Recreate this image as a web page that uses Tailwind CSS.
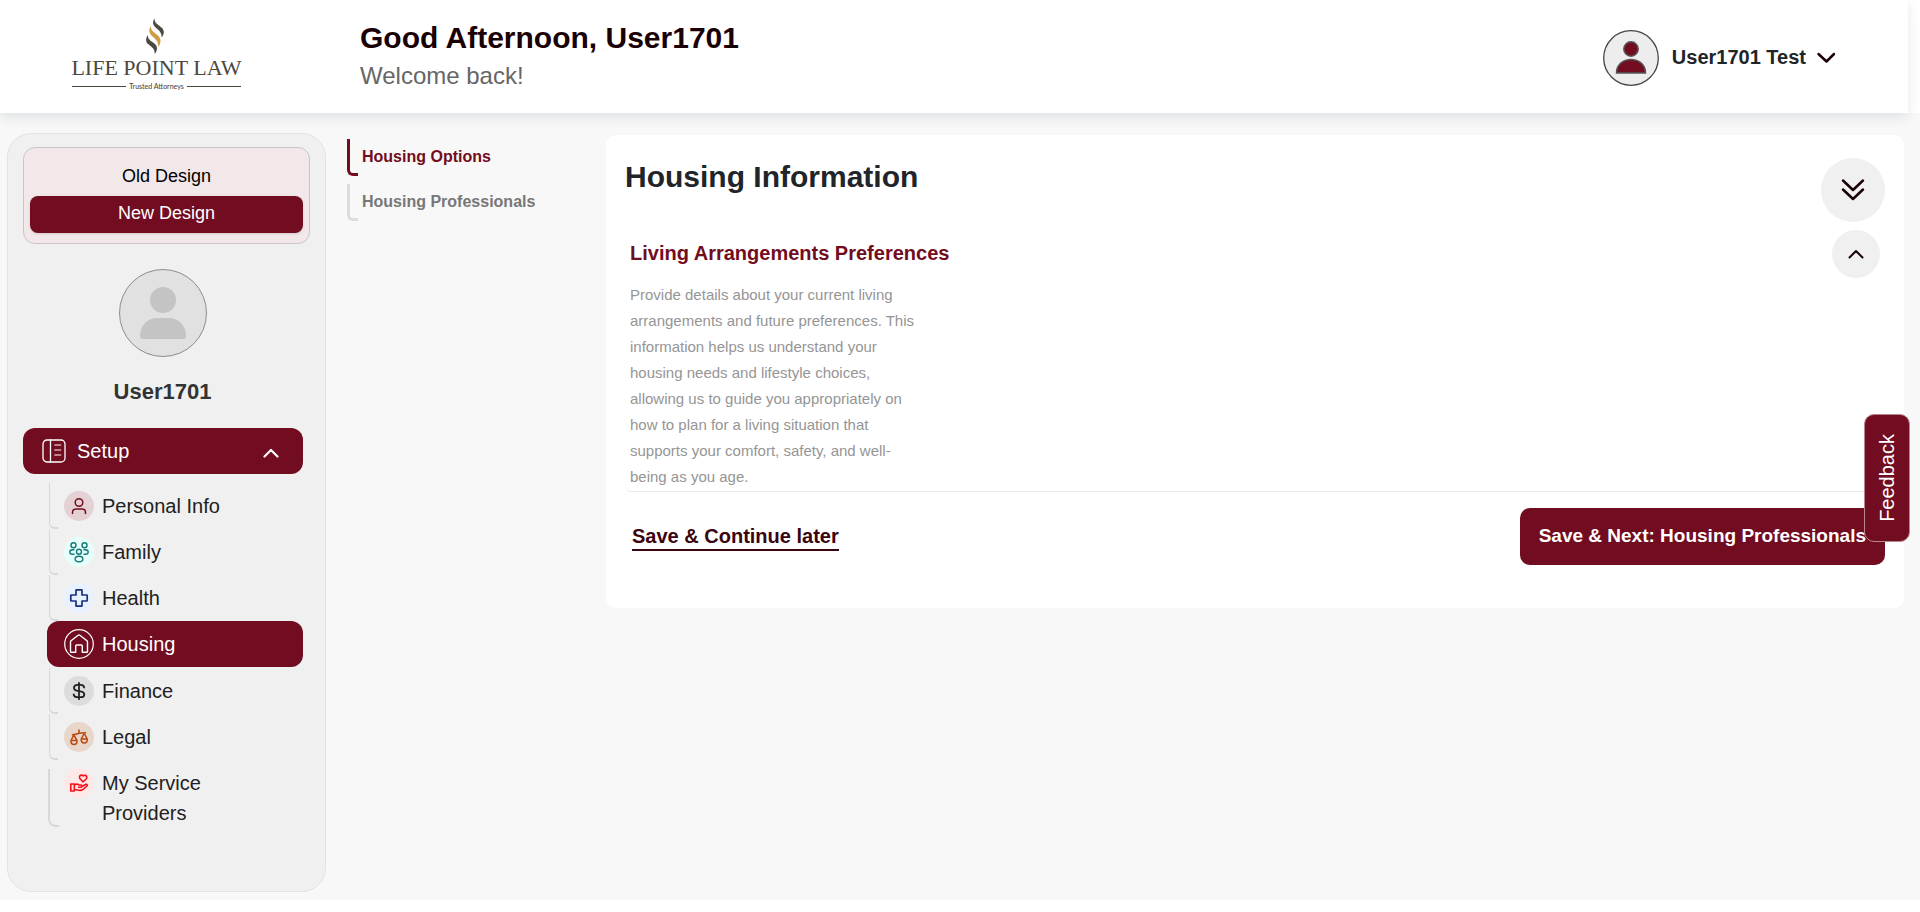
<!DOCTYPE html>
<html lang="en">
<head>
<meta charset="utf-8">
<meta name="viewport" content="width=device-width, initial-scale=1">
<title>Housing Information</title>
<script src="https://cdn.jsdelivr.net/npm/@tailwindcss/browser@4"></script>
</head>
<body class="bg-white font-['Liberation_Sans',Arial,sans-serif] text-[#212529]">

<header class="relative z-10 mr-3 flex h-[113px] items-center bg-white shadow-[0_4px_12px_rgba(40,60,70,0.12)]">
  <a href="#" aria-label="Life Point Law" class="ml-[72px] mr-[119px] flex w-[169px] shrink-0 flex-col items-center pb-1 text-[#4b483f]">
    <svg class="mr-1 h-9 w-[18px]" viewBox="0 0 18 36" aria-hidden="true">
      <path fill="#4b483f" d="M8.500 0C6.500 3.500 6.500 6.500 9 9C12.500 12 16 14 15.500 19.500C18.500 16 18.500 12 15.500 9.500C12 6.500 8 5 8.500 0Z"/>
      <path fill="#cf9d45" d="M4.800 8C2.500 11.500 3 15 5.500 17.500C9 21 12.500 22.500 12.300 29C15 25.500 15.500 21 12.500 18C9 14.500 4.500 13 4.800 8Z"/>
      <path fill="#4b483f" d="M2 17C-.5 20.500 -.5 23.500 2 26C5.500 29 9 30.500 8.800 36C11.500 32.500 11.800 28.500 9 26C5.500 23 1.500 22 2 17Z"/>
    </svg>
    <span class="whitespace-nowrap font-['Liberation_Serif',serif] text-[22px] leading-7">LIFE POINT LAW</span>
    <span class="flex w-full items-center gap-[3px] font-[Lato,sans-serif] text-[7px] font-medium leading-[9px]">
      <span class="h-px flex-1 bg-[#4b483f]"></span>Trusted Attorneys<span class="h-px flex-1 bg-[#4b483f]"></span>
    </span>
  </a>
  <div>
    <h1 class="text-[30px] font-bold leading-[38px] text-[#190005]">Good Afternoon, User1701</h1>
    <p class="text-[24px] leading-[38px] text-[#666]">Welcome back!</p>
  </div>
  <button type="button" class="ml-auto mr-[73px] flex items-center gap-[13px] pt-[3px] text-[20px] font-bold">
    <svg class="size-14" viewBox="0 0 56 56" aria-hidden="true">
      <circle cx="28" cy="28" r="27.300" fill="#ededed" stroke="#4a4446" stroke-width="1.300"/>
      <g fill="#720c20" stroke="#555" stroke-width="1.500"><circle cx="28" cy="19" r="7.200"/><path d="M13.500 43C13.500 25 42.500 25 42.500 43Z"/></g>
    </svg>
    <span class="pb-[2px]">User1701 Test</span>
    <svg class="-ml-[2px] h-3 w-[18px]" viewBox="0 0 18 12" fill="none" stroke="#190005" stroke-width="2.500" stroke-linecap="round" stroke-linejoin="round" aria-hidden="true"><path d="M1.500 2L9.500 9.500L17 2"/></svg>
  </button>
</header>

<div class="flex items-start bg-[#f8f8f8] pb-2 pl-[7px] pr-4 pt-5">

  <aside class="min-h-[759px] w-[319px] shrink-0 rounded-[24px] border border-[#e3e3e3] bg-[#f0f0f0] px-[15px] pt-[13px]">
    <div class="flex flex-col rounded-[12px] border border-[#c9c5c6] bg-[#f2e7e9] px-[6px] pb-[10px] pt-[11px] text-[18px]">
      <button type="button" class="h-[37px] rounded-md pb-[2px] text-black">Old Design</button>
      <button type="button" class="h-[37px] rounded-lg bg-[#720c20] pb-[2px] text-white shadow-sm">New Design</button>
    </div>

    <div class="mr-2 mt-[25px] flex flex-col items-center">
      <svg class="size-[88px]" viewBox="0 0 88 88" aria-hidden="true">
        <circle cx="44" cy="44" r="43.500" fill="#e1e1e1" stroke="#8c8c8c"/>
        <g fill="#c4c4c4"><circle cx="44" cy="31" r="13"/><path d="M21 67C21 56 29 49 38 49H50C59 49 67 56 67 67Q67 70 64 70H24Q21 70 21 67Z"/></g>
      </svg>
      <p class="mt-[18px] text-[22px] font-bold leading-[34px] text-[#333]">User1701</p>
    </div>

    <nav class="mr-[7px] mt-[19px] text-[20px] text-[#212121]" aria-label="Setup">
      <button type="button" class="flex h-[46px] w-full items-center rounded-[12px] bg-[#720c20] pl-[19px] pr-6 text-white">
        <svg class="mr-[11px] size-6" viewBox="0 0 24 24" fill="none" stroke="#fff" stroke-width="1.300" stroke-linecap="round" aria-hidden="true"><rect x="1" y="1" width="22" height="22" rx="4"/><path d="M8.500 1V23"/><path stroke="#d7a9b1" stroke-width="1.700" d="M13 6H18.500M13 11H18.500M13 16H18.500"/></svg>
        Setup
        <svg class="ml-auto mt-1 h-[10px] w-4" viewBox="0 0 16 10" fill="none" stroke="#fff" stroke-width="2.200" stroke-linecap="round" stroke-linejoin="round" aria-hidden="true"><path d="M1.500 8.500L8 2L14.500 8.500"/></svg>
      </button>
      <ul class="ml-6 pt-[9px]">
        <li class="relative">
          <span class="absolute left-[2px] top-0 h-[46px] w-[9px] rounded-bl-[6px] border-b-2 border-l border-[#d8d8d8]"></span>
          <a href="#" class="flex h-[46px] items-center gap-2 pl-[17px]">
            <svg class="size-[30px]" viewBox="0 0 30 30" fill="none" stroke="#720c20" stroke-width="1.500" stroke-linecap="round" aria-hidden="true"><circle cx="15" cy="15" r="15" fill="#e3d1d4" stroke="none"/><circle cx="15" cy="11.500" r="3.800"/><path d="M8.500 22.500V21.500Q8.500 18 12 18H18Q21.500 18 21.500 21.500V22.500"/></svg>
            Personal Info</a>
        </li>
        <li class="relative">
          <span class="absolute left-[2px] top-0 h-[46px] w-[9px] rounded-bl-[6px] border-b-2 border-l border-[#d8d8d8]"></span>
          <a href="#" class="flex h-[46px] items-center gap-2 pl-[17px]">
            <svg class="size-[30px]" viewBox="0 0 30 30" fill="none" stroke="#157a7a" stroke-width="1.400" stroke-linecap="round" aria-hidden="true"><circle cx="15" cy="15" r="15" fill="#e6fffb" stroke="none"/><circle cx="9.500" cy="8.300" r="2.500"/><circle cx="20.500" cy="8.300" r="2.500"/><circle cx="15" cy="14.800" r="2.500"/><ellipse cx="15" cy="22" rx="3.900" ry="2.700"/><path d="M10 12.800H8.500Q5.800 13 5.800 15Q5.800 17.200 8.500 17.300H10M20 12.800H21.500Q24.200 13 24.200 15Q24.200 17.200 21.500 17.300H20"/></svg>
            Family</a>
        </li>
        <li class="relative">
          <span class="absolute left-[2px] top-0 h-[46px] w-[9px] rounded-bl-[6px] border-b-2 border-l border-[#d8d8d8]"></span>
          <a href="#" class="flex h-[46px] items-center gap-2 pl-[17px]">
            <svg class="size-[30px]" viewBox="0 0 30 30" fill="none" stroke="#172f7c" stroke-width="1.700" stroke-linejoin="round" aria-hidden="true"><circle cx="15" cy="15" r="15" fill="#e8f1ff" stroke="none"/><path d="M12.500 6.800H17.500Q18 6.800 18 7.300V12H22.700Q23.200 12 23.200 12.500V17.500Q23.200 18 22.700 18H18V22.700Q18 23.200 17.500 23.200H12.500Q12 23.200 12 22.700V18H7.300Q6.800 18 6.800 17.500V12.500Q6.800 12 7.300 12H12V7.300Q12 6.800 12.500 6.800Z"/></svg>
            Health</a>
        </li>
        <li>
          <a href="#" aria-current="page" class="flex h-[46px] items-center gap-2 rounded-[12px] bg-[#720c20] pl-[17px] text-white">
            <svg class="size-[30px]" viewBox="0 0 30 30" fill="none" stroke="#fff" stroke-width="1.400" stroke-linejoin="round" aria-hidden="true"><circle cx="15" cy="15" r="14.300" stroke-width="1.200"/><path d="M6.500 22.500V13Q6.500 12.300 7 11.800L14.200 6.300Q15 5.700 15.800 6.300L23 11.800Q23.500 12.300 23.500 13V22.500Q23.500 23.300 22.700 23.300H18.300V17Q18.300 16 17.300 16H12.700Q11.700 16 11.700 17V23.300H7.300Q6.500 23.300 6.500 22.500Z"/></svg>
            Housing</a>
        </li>
        <li class="relative mt-px">
          <span class="absolute left-[2px] top-0 h-[46px] w-[9px] rounded-bl-[6px] border-b-2 border-l border-[#d8d8d8]"></span>
          <a href="#" class="flex h-[46px] items-center gap-2 pl-[17px]">
            <svg class="size-[30px]" viewBox="0 0 30 30" fill="none" stroke="#222" stroke-width="1.800" stroke-linecap="round" aria-hidden="true"><circle cx="15" cy="15" r="15" fill="#dcdcdc" stroke="none"/><path d="M15 6.800V23.200M20.200 11.500Q19.800 8.800 16.500 8.800H13.500Q10 8.800 10 11.700Q10 14.200 13.500 14.800L16.500 15.300Q20.300 16 20.300 18.400Q20.300 21.200 16.800 21.200H13.200Q10.200 21.200 9.700 18.500"/></svg>
            Finance</a>
        </li>
        <li class="relative">
          <span class="absolute left-[2px] top-0 h-[46px] w-[9px] rounded-bl-[6px] border-b-2 border-l border-[#d8d8d8]"></span>
          <a href="#" class="flex h-[46px] items-center gap-2 pl-[17px]">
            <svg class="size-[30px]" viewBox="0 0 30 30" fill="none" stroke="#b94a0c" stroke-width="1.500" stroke-linecap="round" stroke-linejoin="round" aria-hidden="true"><circle cx="15" cy="15" r="15" fill="#e8d6ca" stroke="none"/><path d="M15 8V11.500M8.500 12.800Q12 12.500 15 11.300Q18 10.800 21.500 10.800M9.800 13L7 18.500Q6.800 22.500 10 22.500Q13.200 22.500 13 18.500ZM7 18.500H13M20.200 11.500L17.200 17Q17 21 20.200 21Q23.500 21 23.300 17ZM17.200 17H23.300"/></svg>
            Legal</a>
        </li>
        <li class="relative pt-2">
          <span class="absolute left-px top-[9px] h-[58px] w-[11px] rounded-bl-[8px] border-b-2 border-l-2 border-[#d8d8d8]"></span>
          <a href="#" class="flex items-start gap-2 pl-[17px] leading-[30px]">
            <svg class="size-[30px] shrink-0" viewBox="0 0 30 30" fill="none" stroke="#f5111a" stroke-width="1.600" stroke-linecap="round" stroke-linejoin="round" aria-hidden="true"><circle cx="15" cy="15" r="15" fill="#ffe8e8" stroke="none"/><path d="M18.800 13.800L15.800 10.500Q14.800 7.300 17.300 7.100Q18.500 7 19.300 8Q20.500 6.800 21.800 7.500Q23.500 8.800 22.300 11ZM6.800 16H10.300V23H6.800ZM10.300 17Q13 15.300 15 17H17.500Q19 18.300 17 19.200H14.500M18.300 18.200L22 16.300Q24 16.500 23 18L18.500 21.800Q17 22.600 15 22.200L10.300 21.500"/></svg>
            <span class="w-[130px]">My Service Providers</span></a>
        </li>
      </ul>
    </nav>
  </aside>

  <nav class="ml-[21px] mt-[6px] flex w-[240px] shrink-0 flex-col gap-2 text-[16px] font-bold" aria-label="Housing sections">
    <a href="#" class="flex h-[37px] items-center text-[#720c20]"><span class="mr-1 h-full w-[11px] rounded-bl-[6px] border-b-3 border-l-3 border-[#720c20]"></span><span class="pb-px">Housing Options</span></a>
    <a href="#" class="flex h-[37px] items-center text-[#777]"><span class="mr-1 h-full w-[11px] rounded-bl-[6px] border-b-3 border-l-3 border-[#dcdcdc]"></span><span class="pb-px">Housing Professionals</span></a>
  </nav>

  <main class="ml-[19px] mt-[2px] min-w-0 flex-1 rounded-[10px] bg-white pb-[43px] pl-[19px] pr-[19px] pt-[23px]">
    <div class="flex items-start justify-between">
      <h2 class="text-[30px] font-bold leading-[38px]">Housing Information</h2>
      <button type="button" aria-label="Expand all" class="flex size-16 items-center justify-center rounded-full bg-[#f0f0f0]">
        <svg class="size-6" viewBox="0 0 24 24" fill="none" stroke="#190005" stroke-width="2.500" stroke-linecap="round" stroke-linejoin="round" aria-hidden="true"><path d="M2 2.500L12 12L22 2.500M2 11.500L12 21L22 11.500"/></svg>
      </button>
    </div>
    <section class="mt-2 rounded-b-[6px] border-b border-[#ebebeb] pl-[5px] pr-[5px]">
      <div class="flex items-center justify-between">
        <h3 class="pb-[2px] text-[20px] font-bold leading-6 text-[#720c20]">Living Arrangements Preferences</h3>
        <button type="button" aria-label="Collapse section" class="flex size-12 items-center justify-center rounded-full bg-[#f0f0f0]">
          <svg class="h-[10px] w-4" viewBox="0 0 16 10" fill="none" stroke="#190005" stroke-width="2" stroke-linecap="round" stroke-linejoin="round" aria-hidden="true"><path d="M1.500 8.500L8 2L14.500 8.500"/></svg>
        </button>
      </div>
      <p class="mt-1 w-[290px] pb-px text-[15px] leading-[26px] text-[#959595]">Provide details about your current living arrangements and future preferences. This information helps us understand your housing needs and lifestyle choices, allowing us to guide you appropriately on how to plan for a living situation that supports your comfort, safety, and well-being as you age.</p>
    </section>
    <div class="mt-4 flex items-center justify-between pl-[7px]">
      <button type="button" class="border-b-2 border-[#3a0410] text-[20px] font-bold leading-[26px] text-[#3a0410]">Save &amp; Continue later</button>
      <button type="button" class="h-[57px] rounded-[10px] bg-[#720c20] px-[19px] pb-px text-[19px] font-bold text-white">Save &amp; Next: Housing Professionals</button>
    </div>
  </main>
</div>

<button type="button" class="fixed right-[10px] top-[414px] z-20 flex h-[128px] w-[46px] items-center justify-center rounded-[10px] border border-[#b98790] bg-[#720c20] pr-px text-[20px] text-white"><span class="rotate-180 [writing-mode:vertical-rl]">Feedback</span></button>

</body>
</html>
